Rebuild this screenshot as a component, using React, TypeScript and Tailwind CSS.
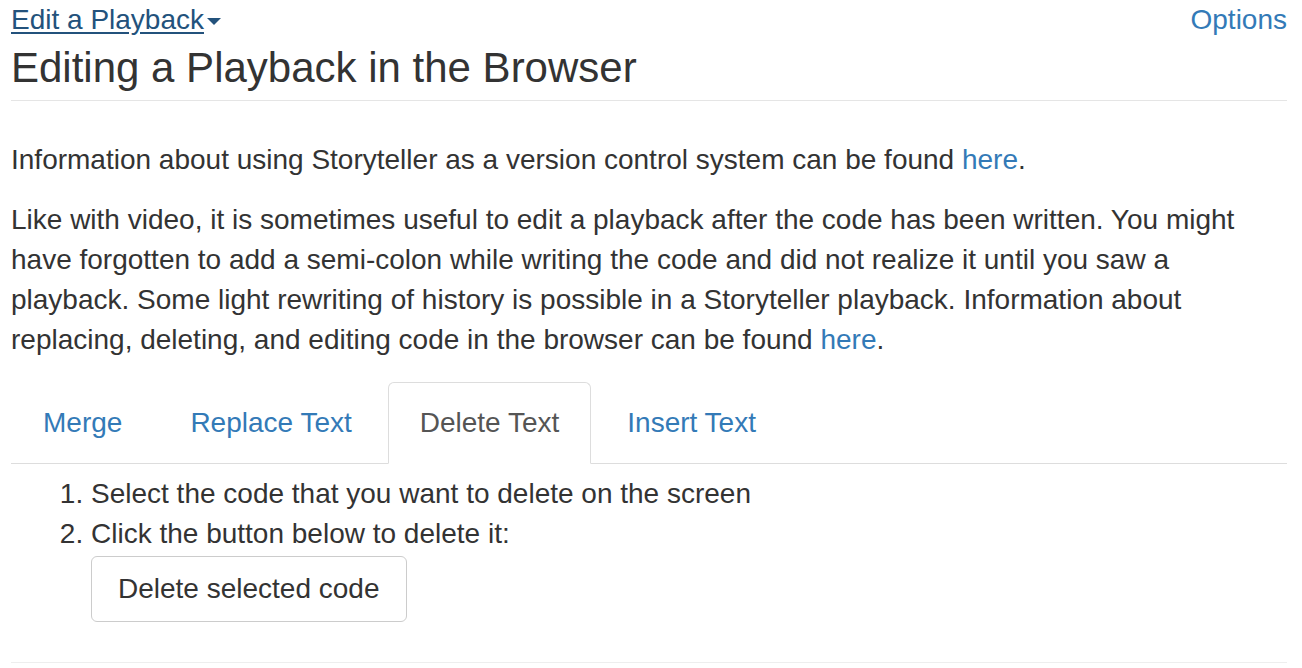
import { useState } from "react";

const TABS = ["Merge", "Replace Text", "Delete Text", "Insert Text"];

export default function App() {
  const [active, setActive] = useState("Delete Text");

  return (
    <div className="min-h-screen bg-white pl-[11px] pr-[15px] text-[28px] leading-[40px] text-[#333] font-['Liberation_Sans',Arial,sans-serif]">
      {/* Top bar */}
      <div className="flex h-[40px] items-center justify-between">
        <a href="#" className="flex items-center text-[#23527c] underline underline-offset-[3px]">
          Edit a Playback
          <span className="ml-[3px] mt-[2px] h-0 w-0 border-x-[7px] border-t-[7px] border-x-transparent border-t-[#23527c]" />
        </a>
        <a href="#" className="text-[#337ab7]">
          Options
        </a>
      </div>

      {/* Page header */}
      <div className="mt-[5px] border-b border-[#e5e5e5] pb-[9px]">
        <h1 className="text-[42px] leading-[46px] font-normal">Editing a Playback in the Browser</h1>
      </div>

      <p className="mt-[39px]">
        Information about using Storyteller as a version control system can be found{" "}
        <a href="#" className="text-[#337ab7]">here</a>.
      </p>
      <p className="mt-[20px]">
        Like with video, it is sometimes useful to edit a playback after the code has been written. You might
        have forgotten to add a semi-colon while writing the code and did not realize it until you saw a
        playback. Some light rewriting of history is possible in a Storyteller playback. Information about
        replacing, deleting, and editing code in the browser can be found{" "}
        <a href="#" className="text-[#337ab7]">here</a>.
      </p>

      {/* Tabs */}
      <ul className="mt-[22px] flex border-b border-[#ddd]">
        {TABS.map((t) => (
          <li key={t} className="-mb-px mr-[4px]">
            <button
              onClick={() => setActive(t)}
              className={
                t === active
                  ? "cursor-default rounded-t-[6px] border border-[#ddd] border-b-transparent bg-white px-[31px] py-[20px] text-[#555]"
                  : "rounded-t-[6px] border border-transparent px-[31px] py-[20px] text-[#337ab7]"
              }
            >
              {t}
            </button>
          </li>
        ))}
      </ul>

      <div className="pb-[40px]">
        <ol className="mt-[10px] list-decimal pl-[80px]">
          <li>Select the code that you want to delete on the screen</li>
          <li>
            Click the button below to delete it:
            <div className="mt-[2px]">
              <button className="rounded-[6px] border border-[#ccc] bg-white px-[26px] py-[12px] text-[#333]">
                Delete selected code
              </button>
            </div>
          </li>
        </ol>
      </div>
      <div className="border-b border-[#eee]" />
    </div>
  );
}
